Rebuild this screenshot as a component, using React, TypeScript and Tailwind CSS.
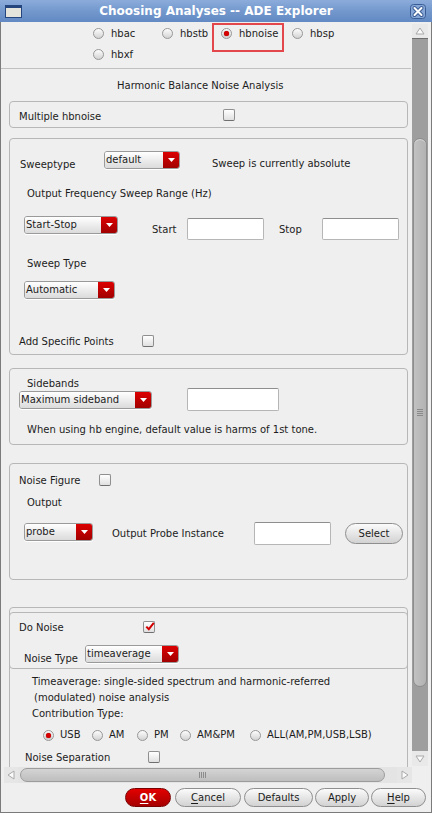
import React from "react";

function Radio({ checked = false }: { checked?: boolean }) {
  return (
    <span className="flex h-[11px] w-[11px] shrink-0 items-center justify-center rounded-full border border-[#979797] bg-linear-to-b from-[#fdfdfd] to-[#d3d3d3]">
      {checked && <span className="h-[5px] w-[5px] rounded-full bg-[#d60000] shadow-[0_0_1px_#800000]" />}
    </span>
  );
}

function RadioItem({ label, w, checked = false }: { label: string; w: string; checked?: boolean }) {
  return (
    <div className={`flex ${w} shrink-0 items-center gap-[7px]`}>
      <Radio checked={checked} />
      <span>{label}</span>
    </div>
  );
}

function Check({ checked = false }: { checked?: boolean }) {
  return (
    <span className="relative flex h-[12px] w-[12px] shrink-0 items-center justify-center rounded-[2px] border border-[#8f8f8f] border-b-[#6f6f6f] bg-linear-to-b from-white to-[#e0e0e0]">
      {checked && (
        <svg width="10" height="9" viewBox="0 0 10 9" className="absolute left-[1px] top-[0px]">
          <path d="M1.3 4.6 L3.8 7.2 L8.8 0.8" fill="none" stroke="#d20000" strokeWidth="2" />
        </svg>
      )}
    </span>
  );
}

function Combo({ label, w }: { label: string; w: string }) {
  return (
    <div className={`flex h-[18px] ${w} shrink-0 overflow-hidden rounded-[3px] border border-[#9a9a9a] shadow-[0_1px_0_#ffffff]`}>
      <div className="flex flex-1 items-center bg-linear-to-b from-white to-[#dbdbdb] pb-[1px] pl-[1px]">{label}</div>
      <div className="flex w-[16px] items-center justify-center bg-linear-to-b from-[#dd0000] to-[#a10000] pb-[1px]">
        <svg width="7" height="4" viewBox="0 0 7 4">
          <path d="M0 0H7L3.5 4Z" fill="#ffffff" />
        </svg>
      </div>
    </div>
  );
}

function Field({ w, h }: { w: string; h: string }) {
  return <div className={`${w} ${h} shrink-0 rounded-[2px] border border-[#b6b6b6] border-t-[#8e8e8e] bg-white`} />;
}

function Arrow({ dir }: { dir: "up" | "down" | "left" | "right" }) {
  const d = {
    up: "M1 7 L5 1 L9 7 Z",
    down: "M1 1 L5 7 L9 1 Z",
    left: "M7 1 L1 5 L7 9 Z",
    right: "M1 1 L7 5 L1 9 Z",
  }[dir];
  const vert = dir === "up" || dir === "down";
  return (
    <svg width={vert ? 10 : 8} height={vert ? 8 : 10} viewBox={vert ? "0 0 10 8" : "0 0 8 10"}>
      <path d={d} fill="#fbfbfb" stroke="#a9a9a9" strokeWidth="1" />
    </svg>
  );
}

export default function App() {
  return (
    <div className="flex h-[813px] w-[432px] flex-col overflow-hidden bg-[#efefef] font-['DejaVu_Sans',sans-serif] text-[10px] leading-[14px] text-[#1c1c1c]">
      {/* title bar */}
      <div className="flex h-[22px] shrink-0 items-center bg-linear-to-b from-[#8cacdb] via-[#7398cd] to-[#6289c3] pl-[5px] pr-[6px]">
        <svg width="17" height="13" viewBox="0 0 17 13">
          <rect x="0.5" y="0.5" width="16" height="12" fill="#e4e4dc" stroke="#24457d" />
          <rect x="1" y="1" width="15" height="2" fill="#24457d" />
        </svg>
        <div className="flex flex-1 justify-center text-[12px] font-bold text-white">Choosing Analyses -- ADE Explorer</div>
        <svg width="16" height="15" viewBox="0 0 16 15">
          <rect x="0.5" y="0.5" width="15" height="14" rx="3" fill="#86a7d6" stroke="#3b5d96" />
          <path d="M4.5 4 L11.5 11 M11.5 4 L4.5 11" stroke="#3b5d96" strokeWidth="4" strokeLinecap="round" />
          <path d="M4.5 4 L11.5 11 M11.5 4 L4.5 11" stroke="#ffffff" strokeWidth="2" strokeLinecap="round" />
        </svg>
      </div>

      <div className="flex flex-1 flex-col border-x border-b border-[#7b7b7b]">
        <div className="flex h-[745px] shrink-0">
          {/* form content */}
          <div className="flex w-[411px] shrink-0 flex-col overflow-hidden pt-[1px]">
            <div className="relative flex h-[21px] shrink-0 items-center pl-[92px]">
              <RadioItem label="hbac" w="w-[69px]" />
              <RadioItem label="hbstb" w="w-[59px]" />
              <RadioItem label="hbnoise" w="w-[71px]" checked />
              <RadioItem label="hbsp" w="w-[60px]" />
              <div className="absolute left-[211px] top-0 h-[29px] w-[72px] border-2 border-[#e4474b]" />
            </div>
            <div className="flex h-[21px] shrink-0 items-center pl-[92px]">
              <RadioItem label="hbxf" w="w-[69px]" />
            </div>
            <div className="mt-[3px] h-px w-[410px] shrink-0 bg-[#c0c0c0]" />
            <div className="h-[32px] shrink-0 pl-[116px] pt-[10px]">Harmonic Balance Noise Analysis</div>

            {/* multiple */}
            <div className="ml-[8px] h-[27px] w-[399px] shrink-0 rounded-[4px] border border-[#b7b7b7] pt-[7px]">
              <div className="flex items-start">
                <div className="ml-[9px] mt-[1px] w-[204px]">Multiple hbnoise</div>
                <Check />
              </div>
            </div>

            {/* sweep */}
            <div className="ml-[8px] mt-[10px] h-[217px] w-[399px] shrink-0 rounded-[4px] border border-[#b7b7b7] pt-[12px]">
              <div className="flex h-[18px] items-start">
                <div className="mt-[7px] w-[94px] pl-[10px]">Sweeptype</div>
                <Combo label="default" w="w-[76px]" />
                <div className="ml-[32px] mt-[6px]">Sweep is currently absolute</div>
              </div>
              <div className="mt-[18px] pl-[17px]">Output Frequency Sweep Range (Hz)</div>
              <div className="mt-[15px] flex items-start">
                <div className="ml-[14px]">
                  <Combo label="Start-Stop" w="w-[94px]" />
                </div>
                <div className="ml-[34px] mt-[7px] w-[35px]">Start</div>
                <div className="mt-[2px]">
                  <Field w="w-[77px]" h="h-[22px]" />
                </div>
                <div className="ml-[15px] mt-[7px] w-[43px]">Stop</div>
                <div className="mt-[2px]">
                  <Field w="w-[77px]" h="h-[22px]" />
                </div>
              </div>
              <div className="mt-[17px] pl-[17px]">Sweep Type</div>
              <div className="ml-[14px] mt-[10px]">
                <Combo label="Automatic" w="w-[91px]" />
              </div>
              <div className="mt-[36px] flex items-start">
                <div className="ml-[9px] w-[123px]">Add Specific Points</div>
                <Check />
              </div>
            </div>

            {/* sidebands */}
            <div className="ml-[8px] mt-[13px] h-[77px] w-[399px] shrink-0 rounded-[4px] border border-[#b7b7b7] pt-[8px]">
              <div className="pl-[17px]">Sidebands</div>
              <div className="-mt-[3px] flex items-start">
                <div className="ml-[9px] mt-[3px]">
                  <Combo label="Maximum sideband" w="w-[133px]" />
                </div>
                <div className="ml-[35px]">
                  <Field w="w-[92px]" h="h-[23px]" />
                </div>
              </div>
              <div className="mt-[12px] pl-[17px]">When using hb engine, default value is harms of 1st tone.</div>
            </div>

            {/* noise figure */}
            <div className="ml-[8px] mt-[18px] h-[117px] w-[399px] shrink-0 rounded-[4px] border border-[#b7b7b7] pt-[10px]">
              <div className="flex h-[12px] items-start">
                <div className="ml-[9px] w-[80px]">Noise Figure</div>
                <Check />
              </div>
              <div className="mt-[10px] pl-[17px]">Output</div>
              <div className="mt-[12px] flex items-start">
                <div className="ml-[14px] mt-[1px]">
                  <Combo label="probe" w="w-[69px]" />
                </div>
                <div className="ml-[19px] mt-[5px] w-[142px]">Output Probe Instance</div>
                <Field w="w-[77px]" h="h-[23px]" />
                <div className="ml-[14px] mt-[1px] flex h-[21px] w-[58px] items-center justify-center rounded-full border border-[#8e8e8e] bg-linear-to-b from-[#fbfbfb] to-[#d2d2d2]">
                  Select
                </div>
              </div>
            </div>

            {/* do noise */}
            <div className="ml-[8px] mt-[27px] h-[200px] w-[399px] shrink-0 rounded-[4px] border border-[#b7b7b7] pt-[4px]">
              <div className="-mx-px h-[57px] rounded-[4px] border border-[#b7b7b7] pt-[8px]">
                <div className="flex h-[12px] items-start">
                  <div className="ml-[9px] w-[124px]">Do Noise</div>
                  <Check checked />
                </div>
                <div className="mt-[12px] flex items-start">
                  <div className="ml-[14px] mt-[7px] w-[61px]">Noise Type</div>
                  <Combo label="timeaverage" w="w-[94px]" />
                </div>
              </div>
              <div className="mt-[6px] pl-[22px]">Timeaverage: single-sided spectrum and harmonic-referred</div>
              <div className="mt-[2px] pl-[24px]">(modulated) noise analysis</div>
              <div className="mt-[2px] pl-[22px]">Contribution Type:</div>
              <div className="mt-[8px] flex h-[12px] items-center pl-[33px]">
                <div className="flex w-[49px] items-center gap-[6px]">
                  <Radio checked />
                  <span>USB</span>
                </div>
                <div className="flex w-[45px] items-center gap-[6px]">
                  <Radio />
                  <span>AM</span>
                </div>
                <div className="flex w-[43px] items-center gap-[6px]">
                  <Radio />
                  <span>PM</span>
                </div>
                <div className="flex w-[70px] items-center gap-[6px]">
                  <Radio />
                  <span>AM&amp;PM</span>
                </div>
                <div className="flex items-center gap-[6px]">
                  <Radio />
                  <span>ALL(AM,PM,USB,LSB)</span>
                </div>
              </div>
              <div className="mt-[10px] flex items-start">
                <div className="ml-[15px] w-[123px]">Noise Separation</div>
                <Check />
              </div>
            </div>
          </div>

          {/* vertical scrollbar */}
          <div className="flex w-[16px] shrink-0 flex-col pb-[1px] pt-[2px]">
            <div className="flex h-[15px] shrink-0 items-center justify-center border-b border-[#6e6e6e] bg-[#e9e9e9]">
              <Arrow dir="up" />
            </div>
            <div className="flex-1 bg-[#9e9e9e] pt-[99px]">
              <div className="mx-px flex h-[549px] items-center justify-center rounded-[7px] border border-[#8d8d8d] bg-linear-to-r from-[#c2c2c2] to-[#b2b2b2] shadow-[inset_0_1px_0_#dadada]">
                <div className="flex flex-col gap-[1px]">
                  <div className="h-px w-[6px] bg-[#8a8a8a]" />
                  <div className="h-px w-[6px] bg-[#8a8a8a]" />
                  <div className="h-px w-[6px] bg-[#8a8a8a]" />
                  <div className="h-px w-[6px] bg-[#8a8a8a]" />
                </div>
              </div>
            </div>
            <div className="flex h-[15px] shrink-0 items-center justify-center bg-[#e9e9e9]">
              <Arrow dir="down" />
            </div>
          </div>
          <div className="w-[3px] shrink-0" />
        </div>

        {/* horizontal scrollbar */}
        <div className="flex h-[16px] shrink-0">
          <div className="w-[3px]" />
          <div className="flex w-[14px] items-center justify-center bg-[#e6e6e6]">
            <Arrow dir="left" />
          </div>
          <div className="flex w-[379px] items-center bg-[#e4e4e4] pl-[2px]">
            <div className="flex h-[14px] w-[365px] items-center justify-center rounded-full border border-[#9c9c9c] bg-linear-to-b from-[#d4d4d4] to-[#bebebe]">
              <div className="flex gap-[1px]">
                <div className="h-[6px] w-px bg-[#8c8c8c]" />
                <div className="h-[6px] w-px bg-[#8c8c8c]" />
                <div className="h-[6px] w-px bg-[#8c8c8c]" />
                <div className="h-[6px] w-px bg-[#8c8c8c]" />
              </div>
            </div>
          </div>
          <div className="flex w-[15px] items-center justify-center bg-[#e6e6e6]">
            <Arrow dir="right" />
          </div>
        </div>

        {/* buttons */}
        <div className="flex h-[29px] shrink-0 items-start pt-[5px]">
          <div className="ml-[124px] flex h-[19px] w-[46px] items-center justify-center rounded-full border border-[#7a0000] bg-linear-to-b from-[#e30000] to-[#a60000] font-bold text-white">
            <span className="underline underline-offset-2">O</span>K
          </div>
          <div className="ml-[4px] flex h-[19px] w-[66px] items-center justify-center rounded-full border border-[#8e8e8e] bg-linear-to-b from-[#fbfbfb] to-[#d2d2d2]">
            <span className="underline underline-offset-2">C</span>ancel
          </div>
          <div className="ml-[3px] flex h-[19px] w-[69px] items-center justify-center rounded-full border border-[#8e8e8e] bg-linear-to-b from-[#fbfbfb] to-[#d2d2d2]">
            Defaults
          </div>
          <div className="ml-[2px] flex h-[19px] w-[54px] items-center justify-center rounded-full border border-[#8e8e8e] bg-linear-to-b from-[#fbfbfb] to-[#d2d2d2]">
            Apply
          </div>
          <div className="ml-[2px] flex h-[19px] w-[55px] items-center justify-center rounded-full border border-[#8e8e8e] bg-linear-to-b from-[#fbfbfb] to-[#d2d2d2]">
            <span className="underline underline-offset-2">H</span>elp
          </div>
        </div>
      </div>
    </div>
  );
}
